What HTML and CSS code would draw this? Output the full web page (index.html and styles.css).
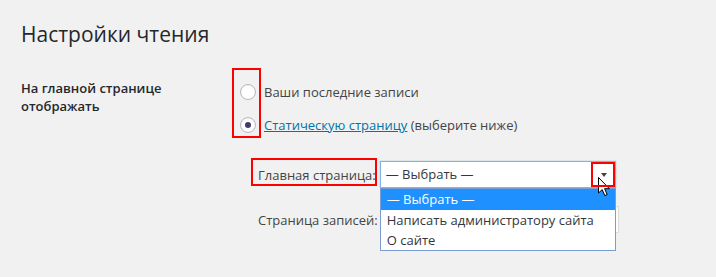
FILE: index.html
```html
<!DOCTYPE html>
<html lang="ru">
<head>
    <meta charset="UTF-8">
    <title>Настройки чтения</title>
    <link rel="stylesheet" href="styles.css">
</head>
<body>
    <div class="wrap">
        <h1>Настройки чтения</h1>

        <div class="form-row">
            <div class="form-th">На главной странице отображать</div>
            <div class="form-td">
                <div class="radios">
                    <label class="radio-line"><span class="radio"></span>Ваши последние записи</label>
                    <label class="radio-line"><span class="radio checked"></span><a href="#">Статическую страницу</a>&nbsp;(выберите ниже)</label>
                    <span class="mark mark-radios"></span>
                </div>

                <ul class="page-selects">
                    <li class="page-select">
                        <label class="page-label">Главная страница:</label>
                        <div class="select is-open">
                            <span class="select__value">— Выбрать —</span>
                            <span class="select__arrow"></span>
                            <span class="mark mark-arrow"></span>
                            <svg class="cursor" width="13" height="20" viewBox="0 0 13 20">
                                <path d="M0.5 0.5 L0.5 16 L4.2 12.6 L6.8 18.6 L9.2 17.6 L6.6 11.7 L11.4 11.7 Z" fill="#fff" stroke="#000" stroke-width="1" stroke-linejoin="round"/>
                            </svg>
                            <ul class="dropdown">
                                <li class="dropdown__item is-active">— Выбрать —</li>
                                <li class="dropdown__item">Написать администратору сайта</li>
                                <li class="dropdown__item">О сайте</li>
                            </ul>
                        </div>
                        <span class="mark mark-label"></span>
                    </li>
                    <li class="page-select">
                        <label class="page-label">Страница записей:</label>
                        <div class="select select--wide"></div>
                    </li>
                </ul>
            </div>
        </div>
    </div>
</body>
</html>
```

FILE: styles.css
```css
body {
    margin: 0;
    padding: 0;
    background: #f1f1f1;
    color: #444;
    font-family: "Open Sans", "Noto Sans", sans-serif;
    font-size: 13px;
}

.wrap {
    padding: 19px 0 0 21px;
}

h1 {
    margin: 0;
    font-size: 21px;
    font-weight: 400;
    line-height: 30px;
    color: #23282d;
}

.form-row {
    display: flex;
    margin-top: 30px;
}

.form-th {
    width: 150px;
    margin-right: 69px;
    font-size: 13px;
    font-weight: 600;
    line-height: 18px;
    color: #23282d;
}

.form-td {
    flex: 1;
}

/* radios */
.radios {
    position: relative;
    display: flex;
    flex-direction: column;
    gap: 13px;
    margin-top: 3px;
}

.radio-line {
    display: flex;
    align-items: center;
    height: 20px;
    line-height: 20px;
}

.radio-line a {
    color: #0073aa;
    text-decoration: underline;
}

.radio {
    box-sizing: border-box;
    width: 16px;
    height: 16px;
    margin-right: 8px;
    border: 1px solid #b4b9be;
    border-radius: 50%;
    background: #fff;
    box-shadow: inset 0 1px 2px rgba(0,0,0,0.07);
    display: flex;
    align-items: center;
    justify-content: center;
}

.radio.checked:after {
    content: "";
    width: 6px;
    height: 6px;
    border-radius: 50%;
    background: #43396a;
}

/* page selects */
.page-selects {
    list-style: none;
    margin: 26px 0 0 18px;
    padding: 0;
}

.page-select {
    position: relative;
    display: flex;
    align-items: center;
    margin-bottom: 18px;
}

.page-label {
    margin-right: 4px;
}

.select {
    position: relative;
    box-sizing: border-box;
    width: 236px;
    height: 27px;
    padding: 0 5px;
    border: 1px solid #ddd;
    background: #fff;
    color: #32373c;
    line-height: 25px;
    box-shadow: inset 0 1px 2px rgba(0,0,0,0.07);
}

.select--wide {
    width: 237px;
}

.select.is-open {
    border-color: #7eb4ea;
    box-shadow: 0 0 1px rgba(30,140,190,0.6);
}

.select__arrow {
    position: absolute;
    right: 8px;
    top: 11px;
    width: 0;
    height: 0;
    border-left: 3px solid transparent;
    border-right: 3px solid transparent;
    border-top: 4px solid #444;
}

.cursor {
    position: absolute;
    left: 217px;
    top: 15px;
    z-index: 3;
}

.dropdown {
    position: absolute;
    left: -1px;
    top: 26px;
    z-index: 2;
    box-sizing: border-box;
    width: 236px;
    margin: 0;
    padding: 0;
    list-style: none;
    border: 1px solid #7a9cd3;
    background: #fff;
}

.dropdown__item {
    height: 20px;
    padding-left: 6px;
    line-height: 20px;
    color: #32373c;
}

.dropdown__item.is-active {
    height: 21px;
    background: #1e90ff;
    color: #fff;
}

/* red annotation boxes */
.mark {
    position: absolute;
    box-sizing: border-box;
    border: 2px solid #f00;
    z-index: 4;
}

.mark-radios {
    left: -8px;
    top: -14px;
    width: 29px;
    height: 70px;
}

.mark-label {
    left: -7px;
    top: -3px;
    width: 126px;
    height: 28px;
}

.mark-arrow {
    left: 210px;
    top: 0;
    width: 24px;
    height: 25px;
}
```
